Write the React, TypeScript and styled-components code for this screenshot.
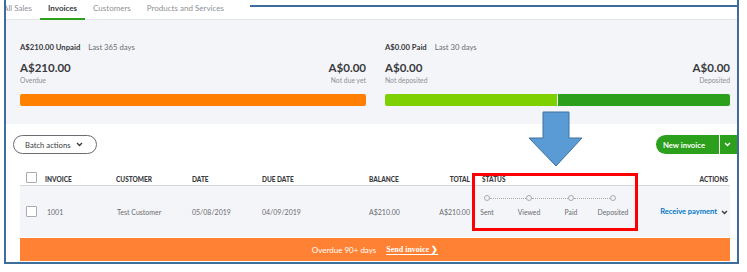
import React from "react";
import styled, { createGlobalStyle } from "styled-components";

const Global = createGlobalStyle`
  html, body { margin: 0; padding: 0; background: #ffffff; }
  body { font-family: Lato, "Open Sans", sans-serif; color: #393a3d; }
  * { box-sizing: border-box; }
`;

const Page = styled.div`
  width: 747px;
  height: 272px;
  position: relative;
  background: #ffffff;
  overflow: hidden;
`;

const Frame = styled.div`
  margin-left: 4px;
  width: 735px;
  height: 264px;
  border-left: 2px solid #3e6d9c;
  border-right: 2px solid #3e6d9c;
  border-bottom: 2px solid #3e6d9c;
  overflow: hidden;
  display: flex;
  flex-direction: column;
  background: #ffffff;
`;

const TopEdge = styled.div`
  position: absolute;
  left: 250px;
  top: 5px;
  width: 489px;
  height: 2px;
  background: #3e6d9c;
`;

const Tabs = styled.div`
  height: 20px;
  display: flex;
  margin-left: -11px;
  border-bottom: 1px solid #e3e4e8;
  flex-shrink: 0;
`;

const Tab = styled.div<{ $active?: boolean }>`
  padding: 0 8px;
  font-size: 8px;
  line-height: 17px;
  color: ${(p) => (p.$active ? "#393a3d" : "#8d9096")};
  font-weight: ${(p) => (p.$active ? 700 : 400)};
  border-bottom: 2px solid ${(p) => (p.$active ? "#2ca01c" : "transparent")};
  height: 20px;
`;

const Summary = styled.div`
  background: #f4f5f8;
  height: 104px;
  padding: 22px 7px 0 14px;
  display: grid;
  grid-template-columns: 346px 345px;
  column-gap: 19px;
  flex-shrink: 0;
`;

const Card = styled.div`
  display: flex;
  flex-direction: column;
`;

const CardHead = styled.div`
  font-size: 7.7px;
  line-height: 10px;
  height: 10px;
  display: flex;
  gap: 8px;
`;

const HeadStrong = styled.span`
  font-weight: 700;
  color: #393a3d;
`;

const HeadLight = styled.span`
  color: #6b6c72;
`;

const Amounts = styled.div`
  margin-top: 10px;
  display: flex;
  justify-content: space-between;
`;

const AmountBlock = styled.div<{ $right?: boolean }>`
  display: flex;
  flex-direction: column;
  align-items: ${(p) => (p.$right ? "flex-end" : "flex-start")};
`;

const Amount = styled.div`
  font-size: 11.5px;
  line-height: 12px;
  font-weight: 700;
  color: #393a3d;
`;

const AmountLabel = styled.div`
  font-size: 6.8px;
  line-height: 9px;
  margin-top: 2px;
  color: #8d9096;
`;

const Bar = styled.div`
  margin-top: 9px;
  height: 12px;
  display: flex;
  gap: 1px;
  border-radius: 2px;
  overflow: hidden;
`;

const BarSeg = styled.div<{ $color: string }>`
  flex: 1;
  background: ${(p) => p.$color};
`;

const Toolbar = styled.div`
  margin-top: 11px;
  padding: 0 0 0 7px;
  margin-right: -3px;
  display: flex;
  justify-content: space-between;
  align-items: center;
  height: 19px;
  flex-shrink: 0;
`;

const BatchButton = styled.div`
  height: 19px;
  width: 84px;
  border: 1px solid #6b6c72;
  border-radius: 10px;
  display: flex;
  align-items: center;
  padding-left: 11px;
  gap: 5px;
  font-size: 7.7px;
  color: #393a3d;
`;

const SplitButton = styled.div`
  height: 19px;
  width: 84px;
  border-radius: 10px 0 0 10px;
  background: #2ca01c;
  display: flex;
  align-items: center;
  color: #ffffff;
  font-weight: 700;
  font-size: 7.7px;
`;

const SplitMain = styled.div`
  width: 64px;
  padding-left: 7px;
  border-right: 1px solid #ffffff;
  height: 100%;
  display: flex;
  align-items: center;
`;

const SplitArrow = styled.div`
  flex: 1;
  display: flex;
  align-items: center;
  padding-left: 4px;
`;

const Table = styled.div`
  margin: 0 7px 0 14px;
  display: flex;
  flex-direction: column;
`;

const cols = "19px 71px 76px 70px 107px 60px 41px 12px 158px 1fr";

const HeadRow = styled.div`
  margin-top: 17px;
  display: grid;
  grid-template-columns: ${cols};
  align-items: end;
  padding: 0 2px 1px 6px;
  height: 15px;
  border-bottom: 1px solid #d4d7dc;
`;

const HeadCell = styled.div<{ $right?: boolean }>`
  font-size: 6.5px;
  line-height: 8px;
  font-weight: 900;
  color: #393a3d;
  text-align: ${(p) => (p.$right ? "right" : "left")};
`;

const CheckBox = styled.div<{ $mt?: number; $mb?: number }>`
  width: 11px;
  height: 11px;
  border: 1px solid #a9abb0;
  background: #ffffff;
  border-radius: 1px;
  margin-top: ${(p) => p.$mt ?? 0}px;
  margin-bottom: ${(p) => p.$mb ?? 0}px;
`;

const DataRow = styled.div`
  display: grid;
  grid-template-columns: ${cols};
  align-items: start;
  background: #f4f5f8;
  padding: 9px 2px 0 6px;
  height: 51px;
`;

const Cell = styled.div<{ $right?: boolean; $pl?: number }>`
  margin-top: 12px;
  font-size: 7px;
  line-height: 10px;
  color: #6b6c72;
  text-align: ${(p) => (p.$right ? "right" : "left")};
  padding-left: ${(p) => p.$pl ?? 0}px;
  white-space: nowrap;
`;

const Steps = styled.div`
  display: grid;
  grid-template-columns: repeat(4, 42px);
  margin-left: -16px;
`;

const Step = styled.div<{ $last?: boolean }>`
  position: relative;
  display: flex;
  flex-direction: column;
  align-items: center;
  &::after {
    content: "";
    display: ${(p) => (p.$last ? "none" : "block")};
    position: absolute;
    left: 24px;
    width: 36px;
    top: 3px;
    border-top: 1px dotted #a9abb0;
  }
`;

const Dot = styled.div`
  width: 6px;
  height: 6px;
  border-radius: 50%;
  border: 1px solid #a9abb0;
  background: #f4f5f8;
`;

const StepLabel = styled.div`
  margin-top: 6px;
  font-size: 6.8px;
  line-height: 10px;
  color: #6b6c72;
  white-space: nowrap;
`;

const Action = styled.div`
  margin-top: 12px;
  display: flex;
  justify-content: flex-end;
  align-items: center;
  gap: 4px;
  font-size: 7.5px;
  line-height: 10px;
  font-weight: 700;
  color: #0077c5;
  white-space: nowrap;
`;

const Banner = styled.div`
  margin: 1px 7px 0 14px;
  height: 23px;
  background: #ff8133;
  display: flex;
  justify-content: center;
  align-items: center;
  gap: 10px;
  color: #ffffff;
  font-size: 8px;
`;

const BannerLink = styled.span`
  font-family: "Liberation Serif", serif;
  font-weight: 700;
  font-size: 8px;
  text-decoration: underline;
  text-underline-offset: 2px;
`;

const RedBox = styled.div`
  position: absolute;
  left: 472px;
  top: 173px;
  width: 166px;
  height: 58px;
  border: 3px solid #ff0000;
`;

const Arrow = styled.svg`
  position: absolute;
  left: 527px;
  top: 110px;
`;

const Chevron = ({ color = "#393a3d", size = 7 }: { color?: string; size?: number }) => (
  <svg width={size} height={size} viewBox="0 0 10 10">
    <path d="M1.5 3 L5 6.5 L8.5 3" fill="none" stroke={color} strokeWidth="2" />
  </svg>
);

export default function App() {
  return (
    <Page>
      <Global />
      <Frame>
        <Tabs>
          <Tab>All Sales</Tab>
          <Tab $active>Invoices</Tab>
          <Tab>Customers</Tab>
          <Tab>Products and Services</Tab>
        </Tabs>
        <Summary>
          <Card>
            <CardHead>
              <HeadStrong>A$210.00 Unpaid</HeadStrong>
              <HeadLight>Last 365 days</HeadLight>
            </CardHead>
            <Amounts>
              <AmountBlock>
                <Amount>A$210.00</Amount>
                <AmountLabel>Overdue</AmountLabel>
              </AmountBlock>
              <AmountBlock $right>
                <Amount>A$0.00</Amount>
                <AmountLabel>Not due yet</AmountLabel>
              </AmountBlock>
            </Amounts>
            <Bar>
              <BarSeg $color="#ff8000" />
            </Bar>
          </Card>
          <Card>
            <CardHead>
              <HeadStrong>A$0.00 Paid</HeadStrong>
              <HeadLight>Last 30 days</HeadLight>
            </CardHead>
            <Amounts>
              <AmountBlock>
                <Amount>A$0.00</Amount>
                <AmountLabel>Not deposited</AmountLabel>
              </AmountBlock>
              <AmountBlock $right>
                <Amount>A$0.00</Amount>
                <AmountLabel>Deposited</AmountLabel>
              </AmountBlock>
            </Amounts>
            <Bar>
              <BarSeg $color="#7fd000" />
              <BarSeg $color="#2ca01c" />
            </Bar>
          </Card>
        </Summary>
        <Toolbar>
          <BatchButton>
            Batch actions <Chevron />
          </BatchButton>
          <SplitButton>
            <SplitMain>New invoice</SplitMain>
            <SplitArrow>
              <Chevron color="#ffffff" />
            </SplitArrow>
          </SplitButton>
        </Toolbar>
        <Table>
          <HeadRow>
            <CheckBox $mb={1} />
            <HeadCell>INVOICE</HeadCell>
            <HeadCell>CUSTOMER</HeadCell>
            <HeadCell>DATE</HeadCell>
            <HeadCell>DUE DATE</HeadCell>
            <HeadCell>BALANCE</HeadCell>
            <HeadCell $right>TOTAL</HeadCell>
            <span />
            <HeadCell>STATUS</HeadCell>
            <HeadCell $right>ACTIONS</HeadCell>
          </HeadRow>
          <DataRow>
            <CheckBox $mt={11} />
            <Cell $pl={2}>1001</Cell>
            <Cell $pl={1}>Test Customer</Cell>
            <Cell>05/08/2019</Cell>
            <Cell>04/09/2019</Cell>
            <Cell>A$210.00</Cell>
            <Cell $right>A$210.00</Cell>
            <span />
            <Steps>
              <Step>
                <Dot />
                <StepLabel>Sent</StepLabel>
              </Step>
              <Step>
                <Dot />
                <StepLabel>Viewed</StepLabel>
              </Step>
              <Step>
                <Dot />
                <StepLabel>Paid</StepLabel>
              </Step>
              <Step $last>
                <Dot />
                <StepLabel>Deposited</StepLabel>
              </Step>
            </Steps>
            <Action>
              Receive payment <Chevron color="#393a3d" />
            </Action>
          </DataRow>
        </Table>
        <Banner>
          <span>Overdue 90+ days</span>
          <BannerLink>Send invoice ❯</BannerLink>
        </Banner>
      </Frame>
      <TopEdge />
      <Arrow width="58" height="58" viewBox="527 110 58 58">
        <polygon
          points="543,112 569,112 569,138 582,138 556,166 529,138 543,138"
          fill="#5b9bd5"
          stroke="#41719c"
          strokeWidth="1"
        />
      </Arrow>
      <RedBox />
    </Page>
  );
}
